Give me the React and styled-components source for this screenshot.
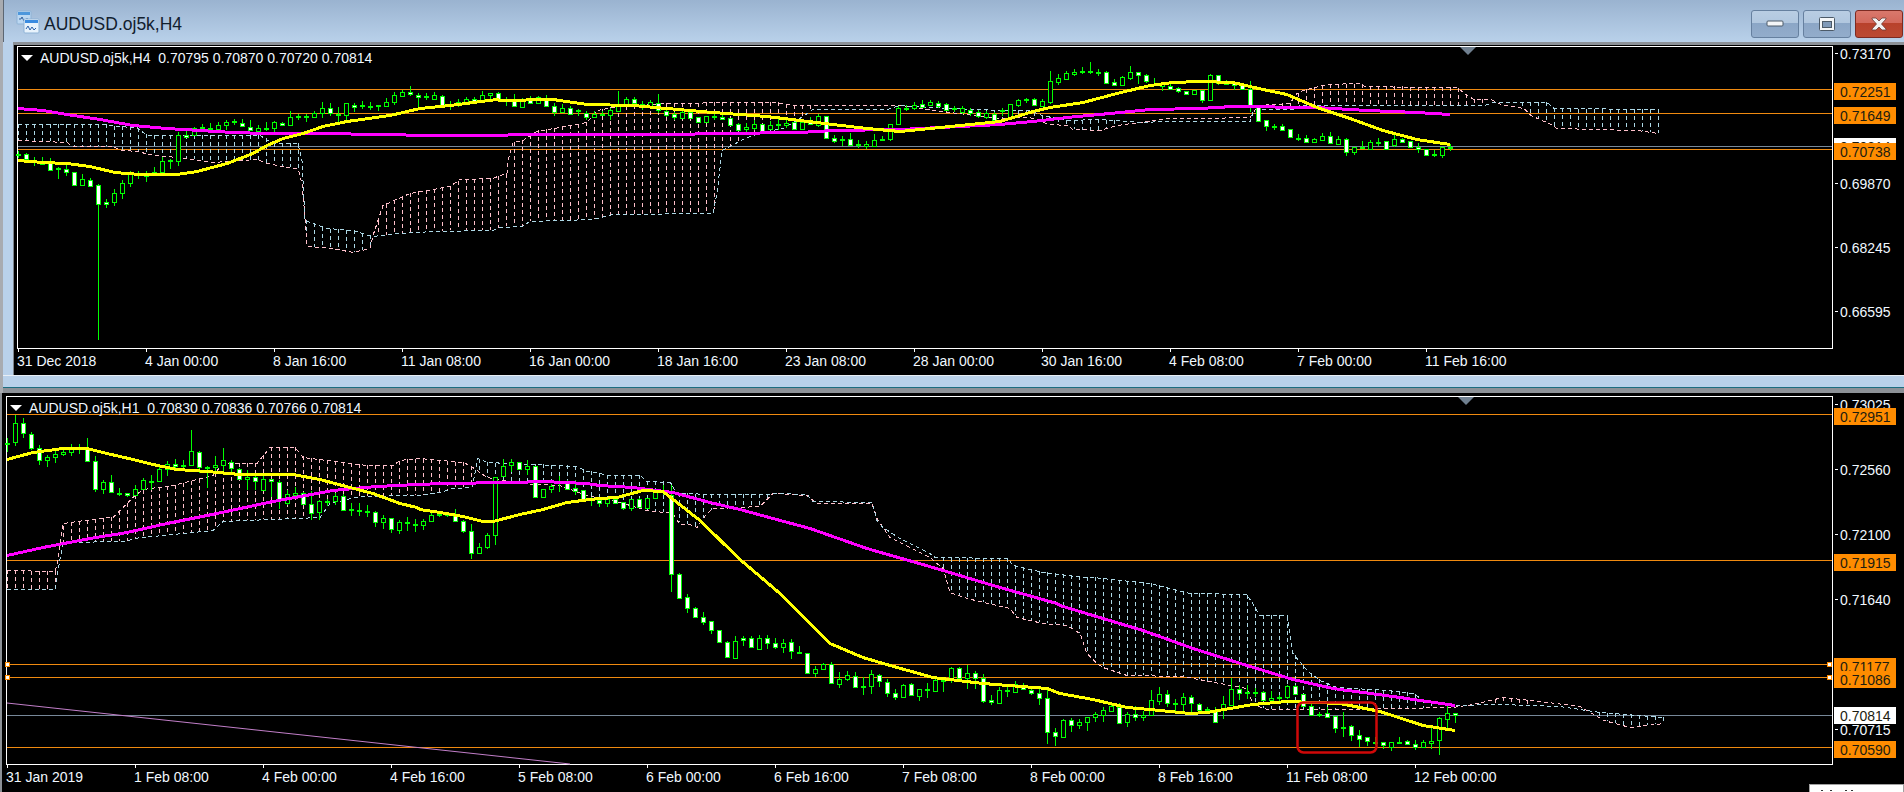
import React from 'react';
import styled, { createGlobalStyle } from 'styled-components';

const GlobalStyle = createGlobalStyle`
  html, body {
    margin: 0;
    padding: 0;
    background: #000;
    overflow: hidden;
  }
  * {
    box-sizing: border-box;
  }
`;

const Page = styled.div`
  position: relative;
  width: 1904px;
  height: 792px;
  overflow: hidden;
  background: #000;
  font-family: "Liberation Sans", Arial, sans-serif;
  font-size: 14px;
  color: #f0f8ff;
`;

const ChildWindow = styled.div`
  background: #b9d1ea;
  border-left: 3px solid #a8abb0;
`;

const TitleBar = styled.div`
  display: flex;
  align-items: flex-start;
  height: 42px;
  padding: 10px 1px 0 12px;
  background: linear-gradient(#9ab3d0, #b9d1ea);
  border-left: 1px solid #5c6672;
`;

const TitleText = styled.span`
  margin: 4px 0 0 4px;
  font-size: 17.500px;
  line-height: 20px;
  color: #12202e;
`;

const WindowButtons = styled.div`
  display: flex;
  gap: 4px;
  margin-left: auto;
`;

const WindowButton = styled.div`
  display: flex;
  align-items: center;
  justify-content: center;
  width: 48px;
  height: 28px;
  border: 1px solid ${props => (props.$close ? '#7c2a22' : '#66809f')};
  border-radius: 3px;
  background: ${props => (props.$close
    ? 'linear-gradient(#d9786c 0, #d3695c 45%, #b8412b 46%, #bb4a33 100%)'
    : 'linear-gradient(#b9cde3 0, #b1c7df 45%, #8ba6c6 46%, #93adcb 100%)')};
`;

const Divider = styled.div`
  height: 3px;
  margin-left: 10px;
  background: #8c9197;
`;

const BottomBand = styled.div`
  height: 18px;
  border-top: 1px solid #e8eef5;
  background: linear-gradient(#b9d1ea 0, #b9d1ea 11px, #1d6d80 11px, #1d6d80 12px, #8c9197 12px, #8c9197 100%);
`;

const ChartPane = styled.div`
  display: grid;
  grid-template-columns: ${props => props.$gutter}px ${props => props.$plotWidth}px 1fr;
  grid-template-rows: ${props => props.$plotHeight}px ${props => props.$axisHeight}px;
  padding-top: ${props => props.$padTop}px;
  margin-left: ${props => props.$indent}px;
  background: #000;
  border-left: ${props => props.$edge};
`;

const Plot = styled.div`
  grid-column: 2;
  grid-row: 1;
  position: relative;
  border: 1px solid #fff;
  svg {
    display: block;
    overflow: visible;
  }
`;

const Legend = styled.div`
  position: absolute;
  top: 3px;
  left: 3px;
  display: flex;
  align-items: center;
  gap: 7px;
  line-height: 16px;
  white-space: pre;
`;

const LegendArrow = styled.i`
  width: 0;
  height: 0;
  border-left: 6px solid transparent;
  border-right: 6px solid transparent;
  border-top: 6px solid #fff;
`;

const PriceAxis = styled.div`
  grid-column: 3;
  grid-row: 1 / 3;
  svg {
    display: block;
  }
  text {
    font-size: 14px;
    fill: #f0f8ff;
  }
  text.tagged {
    fill: #1c1c10;
  }
`;

const TimeAxis = styled.div`
  grid-column: 2;
  grid-row: 2;
  display: flex;
  padding-left: 1px;
`;

const TimeCell = styled.span`
  position: relative;
  flex: 0 0 128px;
  padding-top: 4px;
  line-height: 16px;
  white-space: nowrap;
  text-indent: -1px;
  &::before {
    content: '';
    position: absolute;
    left: 0;
    top: 0;
    width: 1px;
    height: 3px;
    background: #fff;
  }
`;

const Popup = styled.div`
  position: absolute;
  left: 1809px;
  top: 784px;
  width: 95px;
  height: 8px;
  background: #fff;
  border: 1px solid #a0a0a0;
  border-bottom: 0;
  &::before {
    content: '';
    position: absolute;
    left: 11px;
    top: 5px;
    width: 2px;
    height: 1px;
    background: #333;
    box-shadow: 9px 0 #333, 24px 0 #333, 30px 0 #333;
  }
`;

const ORANGE = '#f08a10';
const GRAY = '#778899';
const PINK = '#ffc0cb';
const BLUE = '#add8e6';

// reads a list of x,y taken from a 3x crop whose corner is ox,oy
const zm = (ox, oy, ...v) => {
  const out = [];
  for (let i = 0; i < v.length; i += 2) out.push([ox + v[i] / 3, oy + v[i + 1] / 3]);
  return out;
};

const pointsAttr = pts => pts.map(p => Math.round(p[0]) + ',' + (Math.round(p[1]) + 0.5)).join(' ');

const yAt = (pts, x) => {
  if (x <= pts[0][0]) return pts[0][1];
  for (let i = 1; i < pts.length; i++) {
    if (x <= pts[i][0]) {
      const [x0, y0] = pts[i - 1];
      const [x1, y1] = pts[i];
      return y0 + ((y1 - y0) * (x - x0)) / (x1 - x0 || 1);
    }
  }
  return pts[pts.length - 1][1];
};

// [body top, body bottom, wick high, wick low, 1 = white body]
const h4Candles = [
  [154,155,151,158,0],[154,159,153,160,1],[160,161,157,166,0],[161,164,157,165,1],[162,170,158,171,1],[168,169,167,179,0],
  [169,172,162,176,1],[172,185,172,186,1],[179,185,174,186,0],[180,186,178,187,1],[185,204,184,340,1],[202,204,199,208,1],
  [193,202,189,206,0],[183,193,180,199,0],[173,183,171,187,0],[173,175,171,179,1],[173,176,171,182,0],[172,173,167,175,0],
  [161,172,157,173,0],[160,161,159,169,0],[135,161,132,166,0],[135,137,131,138,1],[128,135,127,136,0],[127,128,124,130,0],
  [128,129,123,130,0],[125,129,122,129,0],[122,125,120,130,0],[121,122,119,125,0],[123,126,119,127,1],[127,130,120,131,1],
  [128,131,125,131,0],[128,129,122,131,0],[122,128,121,133,0],[123,125,122,126,1],[117,125,111,126,0],[116,117,114,120,0],
  [116,117,114,122,0],[113,117,111,118,0],[108,113,102,118,0],[108,113,103,116,1],[114,115,107,124,1],[103,115,103,121,0],
  [105,107,103,112,1],[105,106,101,109,0],[106,107,102,110,0],[105,106,105,111,0],[102,106,98,107,0],[95,102,92,105,0],
  [92,96,90,97,0],[92,94,86,96,1],[95,97,93,107,1],[96,97,93,100,0],[95,99,92,100,0],[96,105,95,106,1],[104,105,101,110,0],
  [102,105,99,107,0],[99,102,97,104,0],[99,102,97,103,1],[95,100,91,103,0],[93,95,93,100,0],[93,99,92,100,1],[99,100,97,106,0],
  [99,106,94,107,1],[100,107,98,108,0],[100,103,96,104,1],[97,103,96,104,0],[99,106,95,106,1],[106,112,103,116,1],[108,112,104,112,0],
  [108,114,106,115,1],[110,111,109,116,0],[113,117,111,120,1],[114,117,111,118,0],[114,115,111,116,0],[110,115,108,120,0],
  [104,111,91,111,0],[99,104,97,105,0],[99,103,97,105,1],[104,105,101,110,0],[102,106,100,108,0],[103,110,94,113,1],[111,115,110,117,1],
  [114,117,112,120,1],[112,118,108,119,0],[112,118,110,119,1],[117,122,117,122,1],[116,122,116,123,0],[116,117,112,120,0],
  [117,119,114,120,1],[118,125,118,125,1],[124,130,123,131,1],[127,129,123,133,0],[124,128,120,130,0],[124,132,124,133,1],
  [125,129,121,130,0],[124,125,117,130,0],[123,125,117,128,0],[122,129,122,130,1],[122,129,120,130,0],[122,124,117,125,1],
  [116,125,114,127,0],[116,138,116,138,1],[138,141,135,143,1],[139,140,136,146,0],[139,145,133,146,1],[144,145,140,148,0],
  [144,146,141,149,0],[140,146,134,146,0],[139,140,136,141,0],[124,139,124,141,0],[108,124,106,125,0],[108,109,105,111,0],
  [105,108,102,110,0],[104,107,100,108,1],[102,105,100,106,0],[103,106,101,108,1],[104,110,103,111,1],[108,109,106,112,0],
  [108,112,106,114,0],[110,113,108,116,1],[112,116,110,118,1],[113,117,111,119,0],[114,120,112,121,1],[110,111,108,116,0],
  [104,118,104,119,0],[100,105,99,107,0],[99,100,98,103,0],[99,105,98,106,1],[101,106,99,107,0],[81,102,71,104,0],[78,82,74,85,0],
  [73,79,71,80,0],[72,74,69,76,0],[71,72,67,74,0],[71,72,62,74,0],[72,73,69,76,0],[72,83,71,84,1],[82,85,79,86,1],[77,85,76,86,0],
  [72,78,66,80,0],[72,75,72,84,1],[75,81,74,83,1],[84,85,78,86,0],[84,86,83,91,0],[86,89,83,90,1],[88,91,87,93,1],[91,94,91,95,1],
  [90,94,90,95,0],[90,100,90,103,1],[75,100,74,100,0],[75,83,75,85,1],[83,84,80,85,0],[83,85,82,90,1],[85,89,84,90,1],[89,105,81,112,1],
  [107,121,107,121,1],[120,126,120,131,1],[126,127,124,130,0],[126,130,124,131,1],[129,137,129,138,1],[138,139,134,141,0],[138,142,135,143,1],
  [139,142,138,143,0],[136,140,133,141,0],[136,143,132,144,1],[139,144,136,144,0],[139,152,138,156,1],[147,152,147,155,0],[147,148,141,148,0],
  [142,149,140,149,0],[142,143,138,146,0],[141,149,141,149,1],[139,145,135,147,0],[139,142,138,143,1],[141,147,141,147,1],[147,149,143,153,1],
  [149,155,149,155,1],[154,155,150,157,0],[147,155,147,158,0],[147,148,144,151,0],
];

const h1Candles = [
  [443,444,438,452,0],[423,442,415,446,0],[423,433,418,438,1],[434,448,432,450,1],[448,460,445,465,1],[457,460,455,467,0],[454,457,450,463,0],
  [452,454,447,456,0],[448,452,444,456,0],[448,449,444,454,0],[448,461,438,462,1],[461,489,456,492,1],[482,489,480,494,0],[482,492,475,493,1],
  [493,494,488,496,0],[493,495,493,497,1],[489,495,485,496,0],[480,489,478,490,0],[481,482,475,490,0],[469,481,466,482,0],[464,469,461,476,0],
  [464,466,459,469,1],[465,466,460,469,0],[451,465,430,466,0],[452,467,451,473,1],[467,468,466,488,0],[465,467,456,472,0],[460,465,448,472,0],
  [462,468,460,474,1],[469,479,468,480,1],[477,479,470,490,0],[477,481,476,490,1],[479,490,476,491,0],[479,481,479,497,1],[482,500,480,509,1],
  [494,503,490,505,0],[493,495,487,497,0],[493,504,492,505,1],[504,513,491,520,1],[501,512,500,520,0],[501,502,499,506,0],[496,501,493,505,0],
  [496,510,494,511,1],[509,510,503,516,0],[510,511,503,516,0],[511,512,505,517,0],[512,522,511,527,1],[518,522,515,529,0],[518,529,518,533,1],
  [522,530,520,534,0],[522,523,517,531,0],[524,525,519,532,0],[521,525,519,530,0],[515,521,512,522,0],[514,515,513,517,0],[514,515,512,517,0],
  [514,521,509,521,1],[521,531,520,533,1],[531,553,524,559,1],[547,553,543,554,0],[535,547,533,549,0],[477,535,477,545,0],[466,476,459,476,0],
  [462,465,459,472,0],[462,469,462,469,1],[466,469,460,475,0],[466,497,466,497,1],[489,497,489,497,0],[486,489,484,493,0],[481,482,476,492,0],
  [481,489,480,490,1],[488,491,480,495,1],[490,499,490,500,1],[499,500,497,506,0],[500,503,500,507,1],[499,503,498,507,0],[499,503,498,504,1],
  [502,508,502,510,1],[499,508,499,511,0],[499,507,498,508,1],[498,508,498,509,0],[490,498,490,498,0],[490,491,485,495,0],[495,574,485,592,1],
  [574,598,573,599,1],[597,608,594,613,1],[608,617,607,618,1],[617,622,612,625,1],[621,630,621,634,1],[630,642,630,642,1],[642,657,641,657,1],
  [641,658,636,659,0],[638,640,636,646,1],[638,647,636,648,1],[638,649,635,649,0],[638,643,635,649,1],[643,647,638,649,1],[643,647,639,653,0],
  [642,651,639,659,1],[652,653,646,654,0],[653,673,653,674,1],[669,673,666,677,0],[664,669,663,670,0],[664,683,662,684,1],[679,684,672,688,0],
  [675,679,671,681,0],[676,687,672,688,1],[686,687,677,695,0],[674,686,670,694,0],[675,681,674,687,1],[682,693,679,697,1],[693,697,689,700,1],
  [685,697,684,698,0],[684,695,683,696,1],[689,696,689,701,0],[689,690,683,698,0],[680,691,679,691,0],[680,681,678,692,0],[668,680,667,683,0],
  [668,678,667,679,1],[673,678,665,689,0],[673,678,671,689,1],[678,701,674,703,1],[700,702,695,705,1],[690,703,687,703,0],[690,691,687,697,0],
  [684,692,681,692,0],[687,689,683,689,1],[690,693,687,695,1],[693,698,687,705,1],[698,732,690,744,1],[732,736,728,746,1],[720,737,719,737,0],
  [720,725,718,732,1],[722,725,719,729,0],[717,722,717,731,0],[714,717,712,722,0],[710,715,707,722,0],[706,711,702,711,0],[707,723,703,723,1],
  [714,722,712,727,0],[714,717,706,721,1],[715,717,711,721,0],[700,715,690,716,0],[694,701,687,705,0],[694,703,690,707,1],[703,704,699,712,0],
  [697,704,693,712,0],[697,703,695,713,1],[704,710,703,712,1],[709,710,707,711,0],[710,722,707,722,1],[704,710,696,719,0],[689,705,678,705,0],
  [689,693,685,700,1],[692,693,685,699,0],[692,693,688,697,0],[692,700,691,701,1],[698,700,691,702,0],[697,698,695,702,0],[686,697,685,699,0],
  [686,694,685,695,1],[694,706,694,706,1],[706,715,703,715,1],[714,715,712,717,0],[713,717,707,717,1],[716,728,716,733,1],[727,728,712,737,0],
  [726,735,725,741,1],[735,739,730,747,1],[737,741,737,746,1],[742,743,737,745,0],[742,745,742,749,1],[742,747,742,751,0],[742,743,737,744,0],
  [741,744,740,745,1],[744,747,740,750,1],[742,747,740,747,0],[741,743,728,749,0],[718,740,717,755,0],[713,719,704,730,0],[713,715,713,723,1],
];

const h4Yellow = [
  ...zm(0, 0, 54,480,130,485,200,490,270,498,345,516,420,521,530,521,590,513,680,490,760,460,800,435,850,415,910,400,970,377,1040,362,1170,345,1260,325,1350,315,1490,298),
  ...zm(500, 60, 0,120,160,117,260,131,400,135,500,145,640,155,800,168,900,180,1000,192,1100,205,1200,212),
  ...zm(1000, 50, 0,212,100,183,150,170,250,155,350,130,450,105,520,96,600,92,700,96,790,116,860,132,950,172,1050,205,1150,240,1250,268,1350,282),
];
const h4Magenta = [
  ...zm(0, 0, 54,323,130,330,200,342,300,358,400,375,500,385,600,390,700,395,800,400,970,400,1300,404,1490,405),
  ...zm(500, 60, 0,225,50,222,500,222,670,219,900,215,1000,210,1200,207),
  ...zm(1000, 50, 0,222,100,212,200,202,330,188,450,178,600,173,700,168,950,170,1100,180,1250,186,1350,193),
];
const h4Pink = [
  ...zm(0, 0, 54,420,200,425,220,438,340,438,365,450,420,452,440,462,530,470,640,485,770,478,800,490,880,503),
  ...zm(0, 120, 895,145,905,190,915,290,920,378,1000,385,1060,395,1110,385,1120,345,1150,255,1230,218,1350,198,1380,178,1480,175),
  ...zm(500, 60, 0,345,20,340,25,300,40,245,70,240,110,212,180,200,260,187,290,150,340,140,500,130,600,130,620,125,820,125,880,135,1200,135),
  [950, 112],
  ...zm(1000, 50, 0,205,90,200,130,215,150,222,200,225,220,238,300,240,320,235,350,225,420,215,500,205,600,205,750,200,760,188,775,165,870,160,890,130,910,120,980,103,1080,100,1095,108,1260,110,1370,110),
  ...zm(1404, 0, 190,285,210,298,260,298,290,312,360,325,380,345,440,372,460,385,700,390,765,400),
];
const h4Blue = [
  ...zm(0, 0, 54,373,320,373,345,378,410,380,440,405,780,405,820,428,895,428),
  ...zm(0, 120, 905,120,915,300,980,325,1060,330,1115,348,1200,340,1300,332,1480,330),
  ...zm(500, 60, 0,500,65,498,90,483,280,478,340,462,640,460,650,400,665,270,690,258,740,230,790,215,850,205,890,180,940,148,1160,148,1200,135),
  [950, 108],
  ...zm(1000, 50, 0,180,90,180,125,195,200,210,300,208,350,210,420,215,500,212,750,212,760,185,775,178,880,178,900,166,1200,166),
  ...zm(1404, 0, 240,316,270,307,430,307,450,325,765,328),
];

const h1Yellow = [
  ...zm(0, 340, 20,356,100,337,190,323,260,323,320,340,400,358,460,372,530,387,620,392,720,403,880,402,960,418,1050,440,1120,460,1200,488,1250,500),
  ...zm(420, 420, 0,266,60,276,130,288,190,302,220,302,300,282,370,268,440,247,510,237),
  ...zm(600, 470, 0,84,50,80,130,60,190,62,300,150,420,268,540,370,620,450,690,518,790,562,870,585,1000,620,1150,640,1340,655),
  ...zm(1060, 560, 0,398,100,418,200,442,300,450,390,458,440,456,580,433,680,423,840,430,960,452,1090,495,1186,510),
];
const h1Magenta = [
  ...zm(0, 340, 20,645,130,622,270,593,380,575,500,550,650,518,820,483,1000,450,1130,438,1250,433),
  ...zm(420, 420, 0,193,60,188,280,185,370,182,500,190,520,192),
  ...zm(600, 470, 0,44,100,52,220,65,330,95,420,118,520,145,630,175,800,235,1000,290,1200,350,1370,400),
  ...zm(1060, 560, 0,134,100,165,250,210,400,265,560,316,700,358,820,385,1000,408,1186,436),
];
const h1Pink = [
  ...zm(0, 340, 20,690,165,693,175,660,190,550,300,535,340,530,355,515,400,470,430,448,520,435,640,405,670,370,770,370,810,320,885,320,910,350,1100,375,1180,375,1200,360,1255,355),
  ...zm(420, 420, 0,115,130,127,150,135,200,170,300,190,420,195,500,225,600,245,680,270,760,278,780,312,810,312,830,322,860,280,880,265,895,265),
  ...zm(600, 470, 480,108,520,70,620,75,650,100,815,100,830,145,870,200,990,260,1030,295,1050,365,1100,385,1230,415,1250,440,1330,458,1400,465,1440,490,1460,550,1490,578),
  ...zm(1060, 560, 130,320,200,345,370,347,480,370,560,385,580,432,620,447,880,448,1000,445,1180,440),
  [1473, 704], [1503, 697], [1540, 701], [1580, 706], [1604, 720], [1630, 727], [1664, 723],
];
const h1Blue = [
  ...zm(0, 340, 20,748,165,748,175,690,190,605,380,603,400,593,640,570,670,543,960,530,990,490,1080,468,1250,466),
  ...zm(420, 420, 0,225,60,215,100,205,155,202,175,115,200,127,470,137,500,152,540,158,560,165,660,165,680,183,750,185,770,220,895,222),
  ...zm(600, 470, 500,72,530,68,620,72,640,92,815,97,830,150,850,170,900,205,990,250,1005,262,1225,265,1240,285,1330,305,1400,315,1450,320),
  ...zm(1060, 560, 100,52,270,68,390,98,560,103,600,165,680,165,700,280,740,330,780,360,830,382,980,390,1060,398,1100,425,1180,435),
  [1500, 704], [1560, 706], [1600, 712], [1664, 717],
];

const Candles = ({ data, firstX }) => (
  <g shapeRendering="crispEdges">
    {data.map((c, i) => {
      const x = firstX + i * 8;
      const [top, bottom, high, low, white] = c;
      const flat = bottom - top <= 1;
      return (
        <g key={i}>
          <line x1={x + 0.5} x2={x + 0.5} y1={high} y2={low} stroke="#00ff00" />
          {flat
            ? <rect x={x - 2} y={top} width={5} height={2} fill="#00ff00" />
            : <rect x={x - 1.5} y={top + 0.5} width={4} height={bottom - top} fill={white ? '#fff' : '#000'} stroke="#00ff00" />}
        </g>
      );
    })}
  </g>
);

const Cloud = ({ pink, blue, firstX, count }) => {
  const hatch = [];
  for (let k = 0; k < count; k++) {
    const x = firstX + k * 8;
    const yp = yAt(pink, x);
    const yb = yAt(blue, x);
    if (Math.abs(yp - yb) < 5) continue;
    hatch.push(
      <line key={k} x1={x + 0.5} x2={x + 0.5} y1={Math.min(yp, yb)} y2={Math.max(yp, yb)} stroke={yp < yb ? PINK : BLUE} strokeDasharray="4 3" />
    );
  }
  return (
    <g shapeRendering="crispEdges" fill="none">
      {hatch}
      <polyline points={pointsAttr(pink)} stroke={PINK} strokeDasharray="4 3" />
      <polyline points={pointsAttr(blue)} stroke={BLUE} strokeDasharray="4 3" />
    </g>
  );
};

const HLine = ({ y, x1, x2, color }) => (
  <line x1={x1} x2={x2} y1={y + 0.5} y2={y + 0.5} stroke={color} shapeRendering="crispEdges" />
);

const ChartDrawing = ({ x, y, width, height, candles, firstX, pink, blue, cloudBars, yellow, magenta, levels, shiftX, children }) => (
  <svg width={width} height={height} viewBox={`${x} ${y} ${width} ${height}`}>
    {levels.map(l => <HLine key={l.y} y={l.y} x1={x} x2={x + width} color={l.color} />)}
    <Cloud pink={pink} blue={blue} firstX={firstX} count={cloudBars} />
    <Candles data={candles} firstX={firstX} />
    <g fill="none" strokeWidth="3" shapeRendering="crispEdges">
      <polyline points={pointsAttr(magenta)} stroke="#ff00ff" />
      <polyline points={pointsAttr(yellow)} stroke="#ffff00" />
    </g>
    <polygon points={`${shiftX},${y} ${shiftX + 16},${y} ${shiftX + 8},${y + 8}`} fill="#708090" />
    {children}
  </svg>
);

// each entry: plain { text, mid } or a coloured tag { text, top, bg }
const PriceLabels = ({ y, height, items }) => (
  <svg width={71} height={height} viewBox={`1833 ${y} 71 ${height}`}>
    {items.map((it, i) => (it.top === undefined
      ? (
        <g key={i}>
          <rect x={1835} y={it.mid - 1} width={3} height={1} fill="#fff" />
          <text x={1840} y={it.mid + 5}>{it.text}</text>
        </g>
      ) : (
        <g key={i}>
          <rect x={1834} y={it.top} width={62} height={17} fill={it.bg || '#ff8c00'} />
          <text className="tagged" x={1840} y={it.top + 14}>{it.text}</text>
        </g>
      )))}
  </svg>
);

const MinGlyph = () => (
  <svg width="18" height="8" viewBox="0 0 18 8"><rect x="1" y="1" width="16" height="5" rx="1" fill="#f4f6f8" stroke="#4c5a68" /></svg>
);
const MaxGlyph = () => (
  <svg width="18" height="16" viewBox="0 0 18 16"><rect x="1.5" y="1.5" width="15" height="13" rx="1" fill="#f4f6f8" stroke="#4c5a68" /><rect x="4.5" y="5.5" width="9" height="6" fill="#7f99b8" stroke="#4c5a68" /></svg>
);
const CloseGlyph = () => (
  <svg width="20" height="16" viewBox="0 0 20 16"><path d="M3 2h4l3 3 3-3h4v1l-4.500 5 4.500 5v1h-4l-3-3-3 3H3v-1l4.500-5L3 3z" fill="#f2f2f2" stroke="#6e3a34" strokeWidth=".8" /></svg>
);

const AppIcon = () => (
  <svg width="24" height="24" viewBox="0 0 24 24">
    <rect x="1" y="1" width="14" height="13" rx="1" fill="#bcd8f2" stroke="#8fb3d6" />
    <rect x="2" y="2" width="12" height="3" fill="#4d97dc" />
    <path d="M3 9h2l1-2 2 4 2-2h2" fill="none" stroke="#2f5f9c" />
    <rect x="8" y="9" width="15" height="14" rx="1" fill="#e8f3fc" stroke="#8fb3d6" />
    <rect x="9" y="10" width="13" height="3" fill="#3a8be0" />
    <path d="M10 19l2-3 2 4 2-3 2 3 2-2" fill="none" stroke="#2a60a8" />
  </svg>
);

const h4Labels = ['31 Dec 2018', '4 Jan 00:00', '8 Jan 16:00', '11 Jan 08:00', '16 Jan 00:00', '18 Jan 16:00', '23 Jan 08:00', '28 Jan 00:00', '30 Jan 16:00', '4 Feb 08:00', '7 Feb 00:00', '11 Feb 16:00'];
const h1Labels = ['31 Jan 2019', '1 Feb 08:00', '4 Feb 00:00', '4 Feb 16:00', '5 Feb 08:00', '6 Feb 00:00', '6 Feb 16:00', '7 Feb 08:00', '8 Feb 00:00', '8 Feb 16:00', '11 Feb 08:00', '12 Feb 00:00'];

const h4Levels = [{ y: 89, color: ORANGE }, { y: 113, color: ORANGE }, { y: 146, color: GRAY }, { y: 149, color: ORANGE }];
const h1Levels = [{ y: 414, color: ORANGE }, { y: 560, color: ORANGE }, { y: 664, color: ORANGE }, { y: 677, color: ORANGE }, { y: 715, color: GRAY }, { y: 747, color: ORANGE }];

const h4Prices = [
  { text: '0.73170', mid: 54 },
  { text: '0.72251', top: 83 },
  { text: '0.71649', top: 107 },
  { text: '0.69870', mid: 184 },
  { text: '0.68245', mid: 248 },
  { text: '0.66595', mid: 312 },
  { text: '0.70814', top: 138, bg: '#fff' },
  { text: '0.70738', top: 143 },
];
const h1Prices = [
  { text: '0.73025', mid: 405 },
  { text: '0.72951', top: 408 },
  { text: '0.72560', mid: 470 },
  { text: '0.72100', mid: 535 },
  { text: '0.71915', top: 554 },
  { text: '0.71640', mid: 600 },
  { text: '0.71177', top: 658 },
  { text: '0.71086', top: 671 },
  { text: '0.70715', mid: 730 },
  { text: '0.70814', top: 707, bg: '#fff' },
  { text: '0.70590', top: 741 },
];

const TrendHandle = ({ x, y }) => (
  <rect x={x + 0.5} y={y + 0.5} width={4} height={4} fill="#fff" stroke="#ff8c00" shapeRendering="crispEdges" />
);

export default function App() {
  return (
    <Page>
      <GlobalStyle />
      <ChildWindow>
        <TitleBar>
          <AppIcon />
          <TitleText>AUDUSD.oj5k,H4</TitleText>
          <WindowButtons>
            <WindowButton><MinGlyph /></WindowButton>
            <WindowButton><MaxGlyph /></WindowButton>
            <WindowButton $close><CloseGlyph /></WindowButton>
          </WindowButtons>
        </TitleBar>
        <Divider />
        <ChartPane $gutter={3} $plotWidth={1816} $plotHeight={303} $axisHeight={26} $padTop={1} $indent={10} $edge="1px solid #7f858c">
          <Plot>
            <ChartDrawing x={18} y={47} width={1814} height={301} candles={h4Candles} firstX={18} pink={h4Pink} blue={h4Blue} cloudBars={206} yellow={h4Yellow} magenta={h4Magenta} levels={h4Levels} shiftX={1460} />
            <Legend><LegendArrow />AUDUSD.oj5k,H4  0.70795 0.70870 0.70720 0.70814</Legend>
          </Plot>
          <TimeAxis>{h4Labels.map(t => <TimeCell key={t}>{t}</TimeCell>)}</TimeAxis>
          <PriceAxis><PriceLabels y={46} height={329} items={h4Prices} /></PriceAxis>
        </ChartPane>
        <BottomBand />
      </ChildWindow>
      <ChartPane $gutter={4} $plotWidth={1827} $plotHeight={369} $axisHeight={27} $padTop={3} $indent={0} $edge="2px solid #8c9197">
        <Plot>
          <ChartDrawing x={7} y={397} width={1825} height={367} candles={h1Candles} firstX={7} pink={h1Pink} blue={h1Blue} cloudBars={208} yellow={h1Yellow} magenta={h1Magenta} levels={h1Levels} shiftX={1458}>
            <line x1="7" y1="703" x2="570" y2="764" stroke="#c27fc9" />
            <rect x="1297.5" y="702.5" width="79" height="50" rx="6" fill="none" stroke="#d00808" strokeWidth="2.5" />
            <TrendHandle x={5} y={662} />
            <TrendHandle x={5} y={675} />
            <TrendHandle x={1827} y={662} />
            <TrendHandle x={1827} y={675} />
          </ChartDrawing>
          <Legend><LegendArrow />AUDUSD.oj5k,H1  0.70830 0.70836 0.70766 0.70814</Legend>
        </Plot>
        <TimeAxis>{h1Labels.map(t => <TimeCell key={t}>{t}</TimeCell>)}</TimeAxis>
        <PriceAxis><PriceLabels y={396} height={396} items={h1Prices} /></PriceAxis>
      </ChartPane>
      <Popup />
    </Page>
  );
}
